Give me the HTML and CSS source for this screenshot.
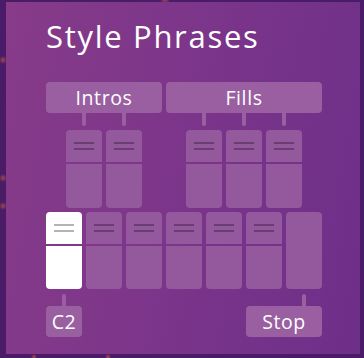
FILE: index.html
```html
<!DOCTYPE html>
<html>
<head>
<meta charset="utf-8">
<link rel="stylesheet" href="styles.css">
</head>
<body>
<div class="panel">
  <h1 class="title">Style Phrases</h1>
  <div class="grid">
    <div class="label label-intros">Intros</div>
    <div class="label label-fills">Fills</div>

    <div class="stem stem-top c2"></div>
    <div class="stem stem-top c4"></div>
    <div class="stem stem-top c8"></div>
    <div class="stem stem-top c10"></div>
    <div class="stem stem-top c12"></div>

    <div class="cell upper c2"><div class="head"><i></i><i></i></div><div class="body"></div></div>
    <div class="cell upper c4"><div class="head"><i></i><i></i></div><div class="body"></div></div>
    <div class="cell upper c8"><div class="head"><i></i><i></i></div><div class="body"></div></div>
    <div class="cell upper c10"><div class="head"><i></i><i></i></div><div class="body"></div></div>
    <div class="cell upper c12"><div class="head"><i></i><i></i></div><div class="body"></div></div>

    <div class="cell lower c1 active"><div class="head"><i></i><i></i></div><div class="body"></div></div>
    <div class="cell lower c3"><div class="head"><i></i><i></i></div><div class="body"></div></div>
    <div class="cell lower c5"><div class="head"><i></i><i></i></div><div class="body"></div></div>
    <div class="cell lower c7"><div class="head"><i></i><i></i></div><div class="body"></div></div>
    <div class="cell lower c9"><div class="head"><i></i><i></i></div><div class="body"></div></div>
    <div class="cell lower c11"><div class="head"><i></i><i></i></div><div class="body"></div></div>
    <div class="cell lower c13 solid"></div>

    <div class="stem stem-bottom c1"></div>
    <div class="stem stem-bottom c13"></div>

    <div class="label label-c2">C2</div>
    <div class="label label-stop">Stop</div>
  </div>
</div>
</body>
</html>
```

FILE: styles.css
```css
html, body {
  margin: 0;
  padding: 0;
}
body {
  width: 364px;
  height: 358px;
  overflow: hidden;
  background:
    radial-gradient(circle at 3px 60px, rgba(200,90,60,0.7) 0, rgba(200,90,60,0) 4px),
    radial-gradient(circle at 3px 178px, rgba(200,90,60,0.7) 0, rgba(200,90,60,0) 4px),
    radial-gradient(circle at 3px 206px, rgba(200,90,60,0.7) 0, rgba(200,90,60,0) 4px),
    radial-gradient(circle at 34px 357px, rgba(200,90,60,0.8) 0, rgba(200,90,60,0) 3px),
    radial-gradient(circle at 108px 357px, rgba(200,90,60,0.8) 0, rgba(200,90,60,0) 3px),
    radial-gradient(circle at 165px 0px, rgba(200,100,70,0.6) 0, rgba(200,100,70,0) 5px),
    #4a1c68;
  font-family: "Open Sans", "Noto Sans", sans-serif;
  color: #fff;
}
.panel {
  margin: 2px 0 0 6px;
  width: 354px;
  height: 352px;
  box-sizing: border-box;
  padding: 0 0 0 40px;
  background: linear-gradient(100deg, #873b89 0%, #7b358a 50%, #6e2f89 100%);
}
.title {
  margin: 0;
  padding-top: 16px;
  height: 80px;
  box-sizing: border-box;
  font-family: "Open Sans", sans-serif;
  font-weight: 400;
  font-size: 31px;
  line-height: 36px;
  letter-spacing: 1.7px;
  color: #fff;
}
.grid {
  display: grid;
  grid-template-columns: repeat(14, 16px);
  column-gap: 4px;
  grid-template-rows: 31px 17px 82px 77px 17px 31px;
}
.label {
  background: #9a5fa1;
  border-radius: 4px;
  display: flex;
  align-items: center;
  justify-content: center;
  font-family: "Open Sans", sans-serif;
  font-size: 19.5px;
  line-height: 24px;
  letter-spacing: 0.6px;
  color: #fff;
}
.label-intros { grid-row: 1; grid-column: 1 / span 6; }
.label-fills { grid-row: 1; grid-column: 7 / span 8; }
.label-c2 { grid-row: 6; grid-column: 1 / span 2; }
.label-stop { grid-row: 6; grid-column: 11 / span 4; }

.stem {
  width: 4px;
  background: #9a5fa1;
  justify-self: center;
}
.stem-top { grid-row: 2; height: 13px; align-self: start; border-radius: 0 0 2px 2px; }
.stem-bottom { grid-row: 5; height: 12px; align-self: end; border-radius: 2px 2px 0 0; }

.c1 { grid-column: 1 / span 2; }
.c2 { grid-column: 2 / span 2; }
.c3 { grid-column: 3 / span 2; }
.c4 { grid-column: 4 / span 2; }
.c5 { grid-column: 5 / span 2; }
.c7 { grid-column: 7 / span 2; }
.c8 { grid-column: 8 / span 2; }
.c9 { grid-column: 9 / span 2; }
.c10 { grid-column: 10 / span 2; }
.c11 { grid-column: 11 / span 2; }
.c12 { grid-column: 12 / span 2; }
.c13 { grid-column: 13 / span 2; }

.cell {
  display: flex;
  flex-direction: column;
  gap: 2px;
}
.upper { grid-row: 3; height: 78px; align-self: start; }
.lower { grid-row: 4; height: 77px; }

.head {
  height: 32px;
  flex: none;
  background: #93599c;
  border-radius: 4px 4px 0 0;
  box-sizing: border-box;
  padding-top: 12px;
  display: flex;
  flex-direction: column;
  align-items: center;
  gap: 4px;
}
.head i {
  display: block;
  width: 20px;
  height: 2px;
  background: #6b3e73;
}
.body {
  flex: 1;
  background: #93599c;
  border-radius: 0 0 4px 4px;
}
.cell.solid {
  background: #93599c;
  border-radius: 4px;
}
.active .head, .active .body {
  background: #ffffff;
}
.active .head i {
  background: #b4b3b8;
}
```
